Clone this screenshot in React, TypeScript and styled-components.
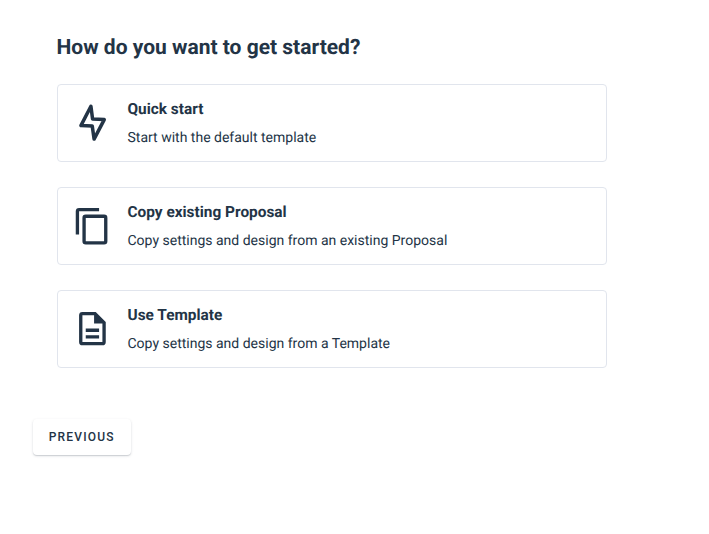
import React from "react";
import styled, { createGlobalStyle } from "styled-components";

const GlobalStyle = createGlobalStyle`
  * { box-sizing: border-box; }
  body { margin: 0; background: #fff; color: #233446; font-family: Roboto, sans-serif; text-rendering: geometricPrecision; }
`;

const Page = styled.main`
  min-height: 100vh;
  padding: 34px 102px 24px 33px;
`;

const Choices = styled.section`
  display: flex;
  flex-direction: column;
  padding-left: 24px;
`;

const Heading = styled.h1`
  margin: 0 0 22px -0.5px;
  font-size: 21px;
  line-height: 28px;
  font-weight: 700;
`;

const OptionList = styled.div`
  display: flex;
  flex-direction: column;
  gap: 25px;
`;

const Option = styled.div`
  display: flex;
  align-items: center;
  width: 550px;
  height: 78px;
  padding-left: 14px;
  border: 1px solid #e1e5ed;
  border-radius: 4px;
  cursor: pointer;
`;

const OptionIcon = styled.svg`
  width: 40px;
  height: 40px;
  margin-right: 15.5px;
  fill: currentColor;
`;

const OptionText = styled.div`
  display: flex;
  flex-direction: column;
  gap: 8px;
`;

const OptionTitle = styled.div`
  font-size: 15.4px;
  line-height: 20px;
  font-weight: 700;
`;

const OptionDescription = styled.div`
  padding-top: 1px;
  margin-bottom: -1px;
  font-size: 14px;
  line-height: 20px;
`;

const PreviousButton = styled.button`
  display: block;
  width: 98px;
  height: 36px;
  margin-top: 51px;
  padding: 0 0.5px 0 0;
  border: 0;
  border-radius: 4px;
  background: #fff;
  color: inherit;
  font: 500 12px Roboto, sans-serif;
  letter-spacing: 1.2px;
  box-shadow: 0 1px 1px rgba(35, 49, 67, 0.16), 0 1px 3px rgba(35, 49, 67, 0.12);
`;

const options = [
  {
    title: "Quick start",
    description: "Start with the default template",
    icon: (
      <path
        d="M11.1 1.8L5.1 13.4L11.9 13.7L13 21.5L19.1 9.8L12.1 9.5Z"
        fill="none"
        stroke="currentColor"
        strokeWidth="2.1"
        strokeLinejoin="round"
      />
    ),
  },
  {
    title: "Copy existing Proposal",
    description: "Copy settings and design from an existing Proposal",
    icon: <path d="M19 21H8V7h11m0-2H8a2 2 0 0 0-2 2v14a2 2 0 0 0 2 2h11a2 2 0 0 0 2-2V7a2 2 0 0 0-2-2m-3-4H4a2 2 0 0 0-2 2v14h2V3h12V1Z" />,
  },
  {
    title: "Use Template",
    description: "Copy settings and design from a Template",
    icon: <path d="M6 1.6a2 2 0 0 0-2 2v16a2 2 0 0 0 2 2h12a2 2 0 0 0 2-2V7.6l-6-6H6m0 2h7v5h5v11H6V3.6m2 8v2h8v-2H8m0 4v2h8v-2H8Z" />,
  },
];

export default function App() {
  return (
    <Page>
      <GlobalStyle />
      <Choices>
        <Heading>How do you want to get started?</Heading>
        <OptionList>
          {options.map((o) => (
            <Option key={o.title}>
              <OptionIcon viewBox="-0.25 -0.15 24 24">{o.icon}</OptionIcon>
              <OptionText>
                <OptionTitle>{o.title}</OptionTitle>
                <OptionDescription>{o.description}</OptionDescription>
              </OptionText>
            </Option>
          ))}
        </OptionList>
      </Choices>
      <PreviousButton>PREVIOUS</PreviousButton>
    </Page>
  );
}
